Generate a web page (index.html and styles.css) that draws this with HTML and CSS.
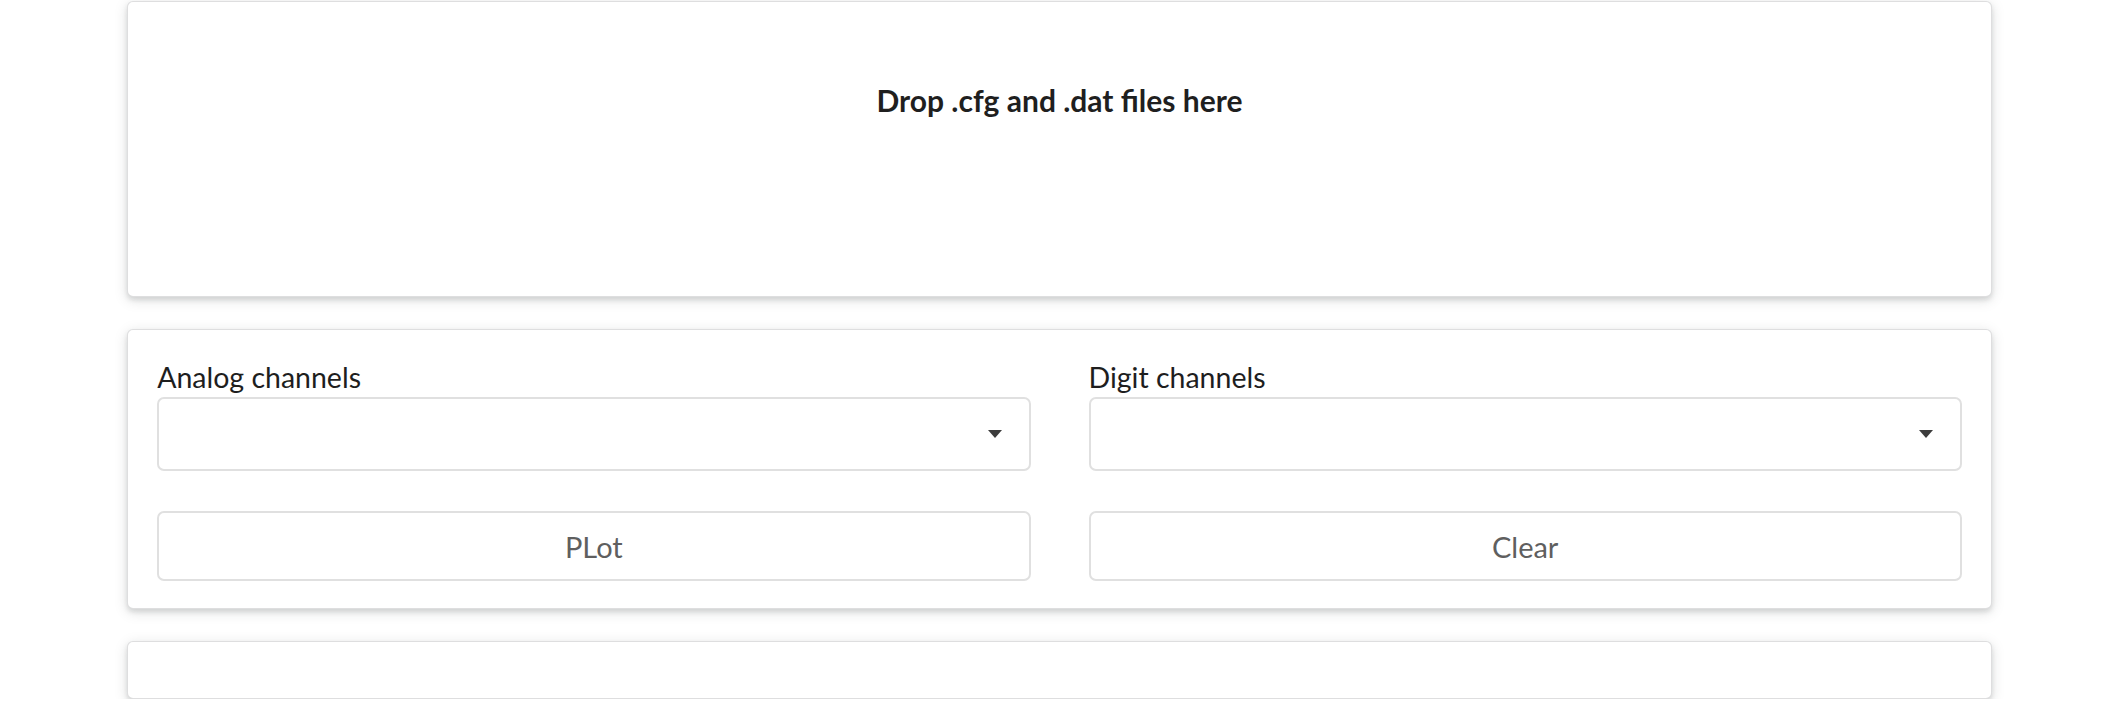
FILE: index.html
```html
<!DOCTYPE html>
<html>
<head>
<meta charset="utf-8">
<link rel="stylesheet" href="styles.css">
</head>
<body>
<div class="page">
  <div class="card drop">
    <h3 class="drop-title">Drop .cfg and .dat files here</h3>
  </div>
  <div class="card controls">
    <div class="grid">
      <div class="field">
        <label class="label">Analog channels</label>
        <div class="select"><span class="caret"></span></div>
      </div>
      <div class="field">
        <label class="label">Digit channels</label>
        <div class="select"><span class="caret"></span></div>
      </div>
      <button class="btn">PLot</button>
      <button class="btn">Clear</button>
    </div>
  </div>
  <div class="card empty"></div>
</div>
</body>
</html>
```
FILE: styles.css
```css
html, body {
  margin: 0;
  padding: 0;
  background: #ffffff;
}
body {
  font-family: Lato, "Open Sans", "Liberation Sans", sans-serif;
  color: rgba(0, 0, 0, 0.87);
}
.page {
  width: 88%;
  margin: 0 auto;
  padding-top: 1px;
  display: flex;
  flex-direction: column;
  gap: 32px;
}
.card {
  box-sizing: border-box;
  background: #fff;
  border: 1px solid rgba(34, 36, 38, 0.15);
  border-radius: 6px;
  box-shadow: 0 3px 5px 0 rgba(34, 36, 38, 0.13), 0 3px 14px 0 rgba(34, 36, 38, 0.13);
}
.drop {
  height: 296px;
  padding-top: 80px;
  text-align: center;
}
.drop-title {
  margin: 0;
  font-size: 30px;
  line-height: 1.2;
  font-weight: 700;
  color: #1f1f1f;
}
.controls {
  height: 280px;
  padding: 27px 29px 28px;
}
.grid {
  display: grid;
  grid-template-columns: 1fr 1fr;
  column-gap: 58px;
  row-gap: 40px;
}
.field {
  display: flex;
  flex-direction: column;
}
.label {
  font-size: 28.5px;
  line-height: 40px;
  color: #1e1e1e;
}
.select {
  position: relative;
  box-sizing: border-box;
  height: 74px;
  border: 2px solid #e0e0e0;
  border-radius: 7px;
  background: #fff;
}
.caret {
  position: absolute;
  right: 27px;
  top: 31px;
  width: 0;
  height: 0;
  border-left: 7px solid transparent;
  border-right: 7px solid transparent;
  border-top: 8px solid #3c3c3c;
}
.btn {
  box-sizing: border-box;
  height: 70px;
  border: 2px solid #e0e0e0;
  border-radius: 7px;
  background: #fff;
  font-family: Lato, "Open Sans", "Liberation Sans", sans-serif;
  font-size: 29px;
  color: #5f5f5f;
  padding: 0;
}
.empty {
  height: 58px;
}
```
